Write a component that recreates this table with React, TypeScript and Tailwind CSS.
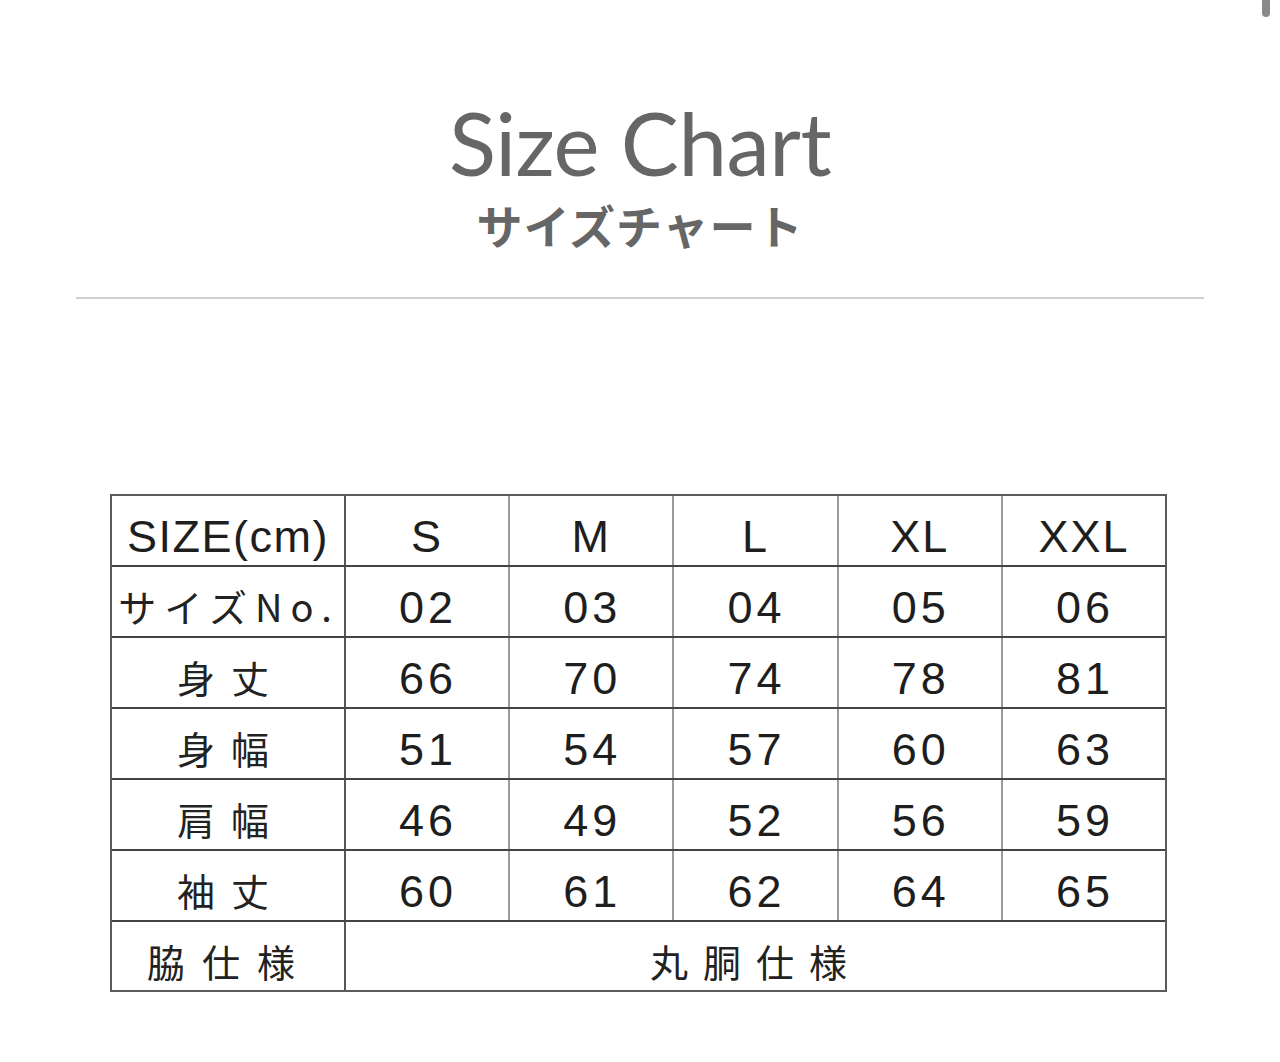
import React from "react";

const sizes = ["S", "M", "L", "XL", "XXL"];
const rows: { label: string; values: string[] }[] = [
  { label: "サイズNo.", values: ["02", "03", "04", "05", "06"] },
  { label: "身丈", values: ["66", "70", "74", "78", "81"] },
  { label: "身幅", values: ["51", "54", "57", "60", "63"] },
  { label: "肩幅", values: ["46", "49", "52", "56", "59"] },
  { label: "袖丈", values: ["60", "61", "62", "64", "65"] },
];

const num = "font-['Liberation_Sans',Arial,sans-serif] text-[45px] leading-none text-[#1e1e1e]";
const jp = "font-['Noto_Sans_CJK_JP',sans-serif] text-[38px] leading-none font-normal text-[#222]";
const sep = "border-l-2 border-[#9a9a9a]";

export default function App() {
  return (
    <div className="relative w-[1280px] h-[1062px] bg-white overflow-hidden">
      <div className="absolute right-[10px] top-0 w-[8px] h-[17px] rounded-b-full bg-[#8a8a8a]" />
      <div className="flex flex-col items-center pt-[99px]">
        <h1 className="font-['Lato',sans-serif] text-[87px] leading-none text-[#666] tracking-[-0.5px]">Size Chart</h1>
        <div className="mt-[15px] font-['Noto_Sans_CJK_JP',sans-serif] font-bold text-[46px] leading-none text-[#666] tracking-[1px]">サイズチャート</div>
        <div className="mt-[50px] w-[1128px] h-[2px] bg-[#cfcfcf]" />
      </div>
      <div className="mt-[195px] ml-[110px] w-[1057px] border-2 border-[#5a5a5a]">
        <div className="flex h-[69px]">
          <div className={`w-[234px] flex items-center justify-center pt-[11px] border-r-2 border-[#555] ${num} text-[38px] tracking-[1.5px]`}>SIZE(cm)</div>
          {sizes.map((s, i) => (
            <div key={s} className={`flex-1 flex items-center justify-center pt-[12px] ${i > 0 ? sep : ""} ${num} tracking-[2px]`}>{s}</div>
          ))}
        </div>
        {rows.map((r) => (
          <div key={r.label} className="flex h-[71px] border-t-2 border-[#444]">
            <div className={`w-[234px] flex items-center justify-center pt-[9px] border-r-2 border-[#555] ${jp} ${r.label.length <= 2 ? "tracking-[16px] pl-[6px]" : "tracking-[8px] pl-[2px]"}`}>
              {r.label}
            </div>
            {r.values.map((v, i) => (
              <div key={i} className={`flex-1 flex items-center justify-center pt-[11px] ${i > 0 ? sep : ""} ${num} tracking-[4px] pl-[2px]`}>{v}</div>
            ))}
          </div>
        ))}
        <div className="flex h-[70px] border-t-2 border-[#444]">
          <div className={`w-[234px] flex items-center justify-center pt-[9px] border-r-2 border-[#555] ${jp} tracking-[17px] pl-[3px]`}>脇仕様</div>
          <div className={`flex-1 flex items-center justify-center pt-[9px] ${jp} tracking-[15px] pl-[1px]`}>丸胴仕様</div>
        </div>
      </div>
    </div>
  );
}
